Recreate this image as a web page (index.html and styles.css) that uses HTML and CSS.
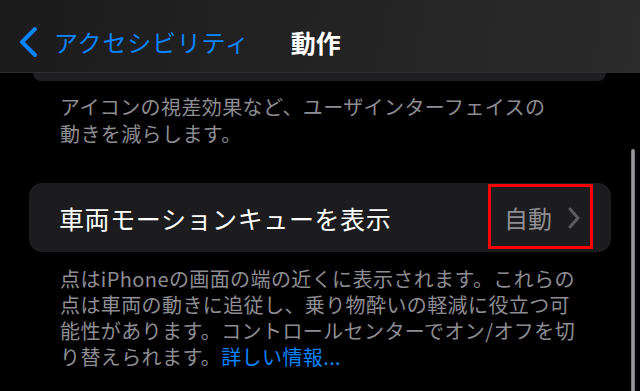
FILE: index.html
```html
<!DOCTYPE html>
<html lang="ja">
<head>
<meta charset="utf-8">
<link rel="stylesheet" href="styles.css">
</head>
<body>
<div class="screen">
  <header class="nav">
    <svg class="back-chevron" width="24" height="34" viewBox="0 0 24 34">
      <path d="M19 4 L6 17 L19 30" fill="none" stroke="#0a84ff" stroke-width="4" stroke-linecap="round" stroke-linejoin="round"/>
    </svg>
    <span class="back-label">アクセシビリティ</span>
    <span class="nav-title">動作</span>
  </header>
  <div class="content">
    <div class="card-stub"></div>
    <p class="footer footer-first">アイコンの視差効果など、ユーザインターフェイスの<br>動きを減らします。</p>
    <div class="card">
      <span class="cell-label">車両モーションキューを表示</span>
      <span class="cell-value">自動</span>
      <svg class="cell-chevron" width="14" height="22" viewBox="0 0 14 22">
        <path d="M3 2 L11 11 L3 20" fill="none" stroke="#5b5b60" stroke-width="3" stroke-linecap="round" stroke-linejoin="round"/>
      </svg>
      <div class="highlight"></div>
    </div>
    <p class="footer footer-second">点はiPhoneの画面の端の近くに表示されます。これらの<br>点は車両の動きに追従し、乗り物酔いの軽減に役立つ可<br>能性があります。コントロールセンターでオン/オフを切<br>り替えられます。<span class="link">詳しい情報...</span></p>
  </div>
  <div class="scrollbar"></div>
</div>
</body>
</html>
```
FILE: styles.css
```css
html, body {
  margin: 0;
  padding: 0;
  background: #000;
}
body {
  width: 640px;
  height: 391px;
  overflow: hidden;
  font-family: "Noto Sans CJK JP", "Noto Sans", sans-serif;
}
.screen {
  position: relative;
  width: 640px;
  height: 391px;
  overflow: hidden;
}
.nav {
  height: 60px;
  padding-top: 12px;
  display: flex;
  align-items: center;
  padding-left: 16px;
  background: linear-gradient(100deg, #1b1b1b 0%, #232323 50%, #2b2b2b 100%);
  border-bottom: 1px solid #2f2f2f;
}
.back-chevron {
  display: block;
}
.back-label {
  margin-left: 14px;
  color: #0a84ff;
  font-size: 24px;
  letter-spacing: 0.8px;
  line-height: 30px;
}
.nav-title {
  margin-left: 41px;
  color: #fff;
  font-size: 25px;
  font-weight: 700;
  line-height: 30px;
}
.content {
  padding: 0 29px;
}
.card-stub {
  height: 8px;
  margin: 0 5px 0 4px;
  background: #1f1f21;
  border-radius: 0 0 12px 12px;
}
.footer {
  margin: 0;
  padding-left: 31px;
  color: #8d8d93;
  font-size: 20px;
  letter-spacing: 0.4px;
  line-height: 26.5px;
}
.footer-first {
  padding-top: 13px;
}
.card {
  position: relative;
  margin-top: 36px;
  height: 69px;
  display: flex;
  align-items: center;
  padding: 0 30px;
  background: #1c1c1e;
  border-radius: 13px;
}
.cell-label {
  color: #fff;
  font-size: 25px;
  letter-spacing: 0.6px;
  flex: 1;
}
.cell-value {
  color: #8e8e93;
  font-size: 24px;
}
.cell-chevron {
  display: block;
  margin-left: 15px;
}
.highlight {
  position: absolute;
  left: 459px;
  top: 1px;
  width: 99px;
  height: 59px;
  border: 3px solid #ff0000;
}
.footer-second {
  margin-top: 14px;
  line-height: 26px;
}
.link {
  color: #0a84ff;
}
.scrollbar {
  position: absolute;
  left: 631px;
  top: 149px;
  width: 4px;
  height: 260px;
  border-radius: 2px;
  background: linear-gradient(90deg, #6e6e72, #a5a5aa, #6e6e72);
}
```
